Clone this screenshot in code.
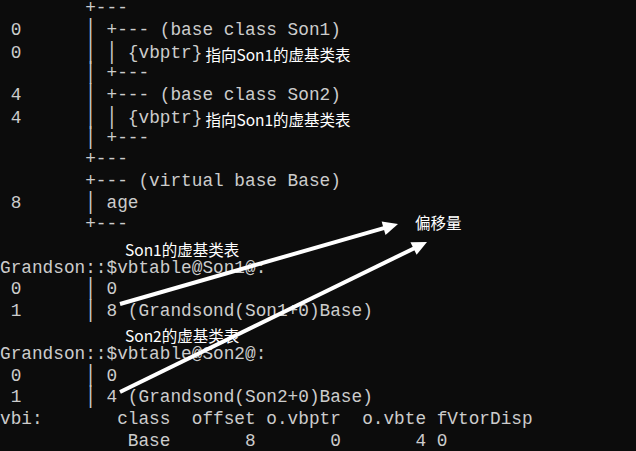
import React from "react";

type Line = { t: string; note?: string; noteLeft?: boolean };

const lines: Line[] = [
  { t: "        +---" },
  { t: " 0      | +--- (base class Son1)" },
  { t: " 0      | | {vbptr}", note: "指向Son1的虚基类表" },
  { t: "        | +---" },
  { t: " 4      | +--- (base class Son2)" },
  { t: " 4      | | {vbptr}", note: "指向Son1的虚基类表" },
  { t: "        | +---" },
  { t: "        +---" },
  { t: "        +--- (virtual base Base)" },
  { t: " 8      | age" },
  { t: "        +---" },
  { t: "", note: "Son1的虚基类表", noteLeft: true },
  { t: "Grandson::$vbtable@Son1@:" },
  { t: " 0      | 0" },
  { t: " 1      | 8 (Grandsond(Son1+0)Base)" },
  { t: "", note: "Son2的虚基类表", noteLeft: true },
  { t: "Grandson::$vbtable@Son2@:" },
  { t: " 0      | 0" },
  { t: " 1      | 4 (Grandsond(Son2+0)Base)" },
  { t: "vbi:       class  offset o.vbptr  o.vbte fVtorDisp" },
  { t: "            Base       8       0       4 0" },
  { t: "Default Fields: (size 12) TI  vbtable: Grandson::`vbtable'{for `Son1'}" },
];

function Arrow({ x1, y1, x2, y2 }: { x1: number; y1: number; x2: number; y2: number }) {
  const dx = x2 - x1;
  const dy = y2 - y1;
  const len = Math.hypot(dx, dy);
  const ux = dx / len;
  const uy = dy / len;
  const nx = -uy;
  const ny = ux;
  const head = 15;
  const hw = 7;
  const bx = x2 - ux * head;
  const by = y2 - uy * head;
  const pts = `${x2},${y2} ${bx + nx * hw},${by + ny * hw} ${bx - nx * hw},${by - ny * hw}`;
  return (
    <g>
      <line x1={x1} y1={y1} x2={bx + ux * 2} y2={by + uy * 2} stroke="#ffffff" strokeWidth={4} />
      <polygon points={pts} fill="#ffffff" />
    </g>
  );
}

function Text({ t }: { t: string }) {
  const parts = t.split("|");
  return (
    <>
      {parts.map((p, i) => (
        <React.Fragment key={i}>
          {p}
          {i < parts.length - 1 && <span className="inline-block scale-y-[1.3]">|</span>}
        </React.Fragment>
      ))}
    </>
  );
}

export default function App() {
  return (
    <div className="relative w-[636px] h-[451px] overflow-hidden bg-[#0c0c0c]">
      <div className="mt-[-2px] whitespace-pre text-[#cccccc] text-[17.75px] leading-[21.63px] font-['Liberation_Mono',monospace]">
        {lines.map((l, i) => (
          <div key={i} className="h-[21.63px]">
            <Text t={l.t} />
            {l.note && (
              <span
                className={`${l.noteLeft ? "ml-[125px]" : "ml-[3px]"} inline-block translate-y-[3px] text-white text-[15.5px] font-['Noto_Sans_CJK_SC','Noto_Sans',sans-serif]`}
              >
                {l.note}
              </span>
            )}
          </div>
        ))}
      </div>
      <div className="absolute left-[415px] top-[211px] text-white text-[15.5px] leading-[22px] font-['Noto_Sans_CJK_SC','Noto_Sans',sans-serif]">
        偏移量
      </div>
      <svg className="absolute inset-0 pointer-events-none" width={636} height={451} viewBox="0 0 636 451">
        <Arrow x1={120} y1={304} x2={398} y2={224} />
        <Arrow x1={120} y1={392} x2={427} y2={242} />
      </svg>
    </div>
  );
}
